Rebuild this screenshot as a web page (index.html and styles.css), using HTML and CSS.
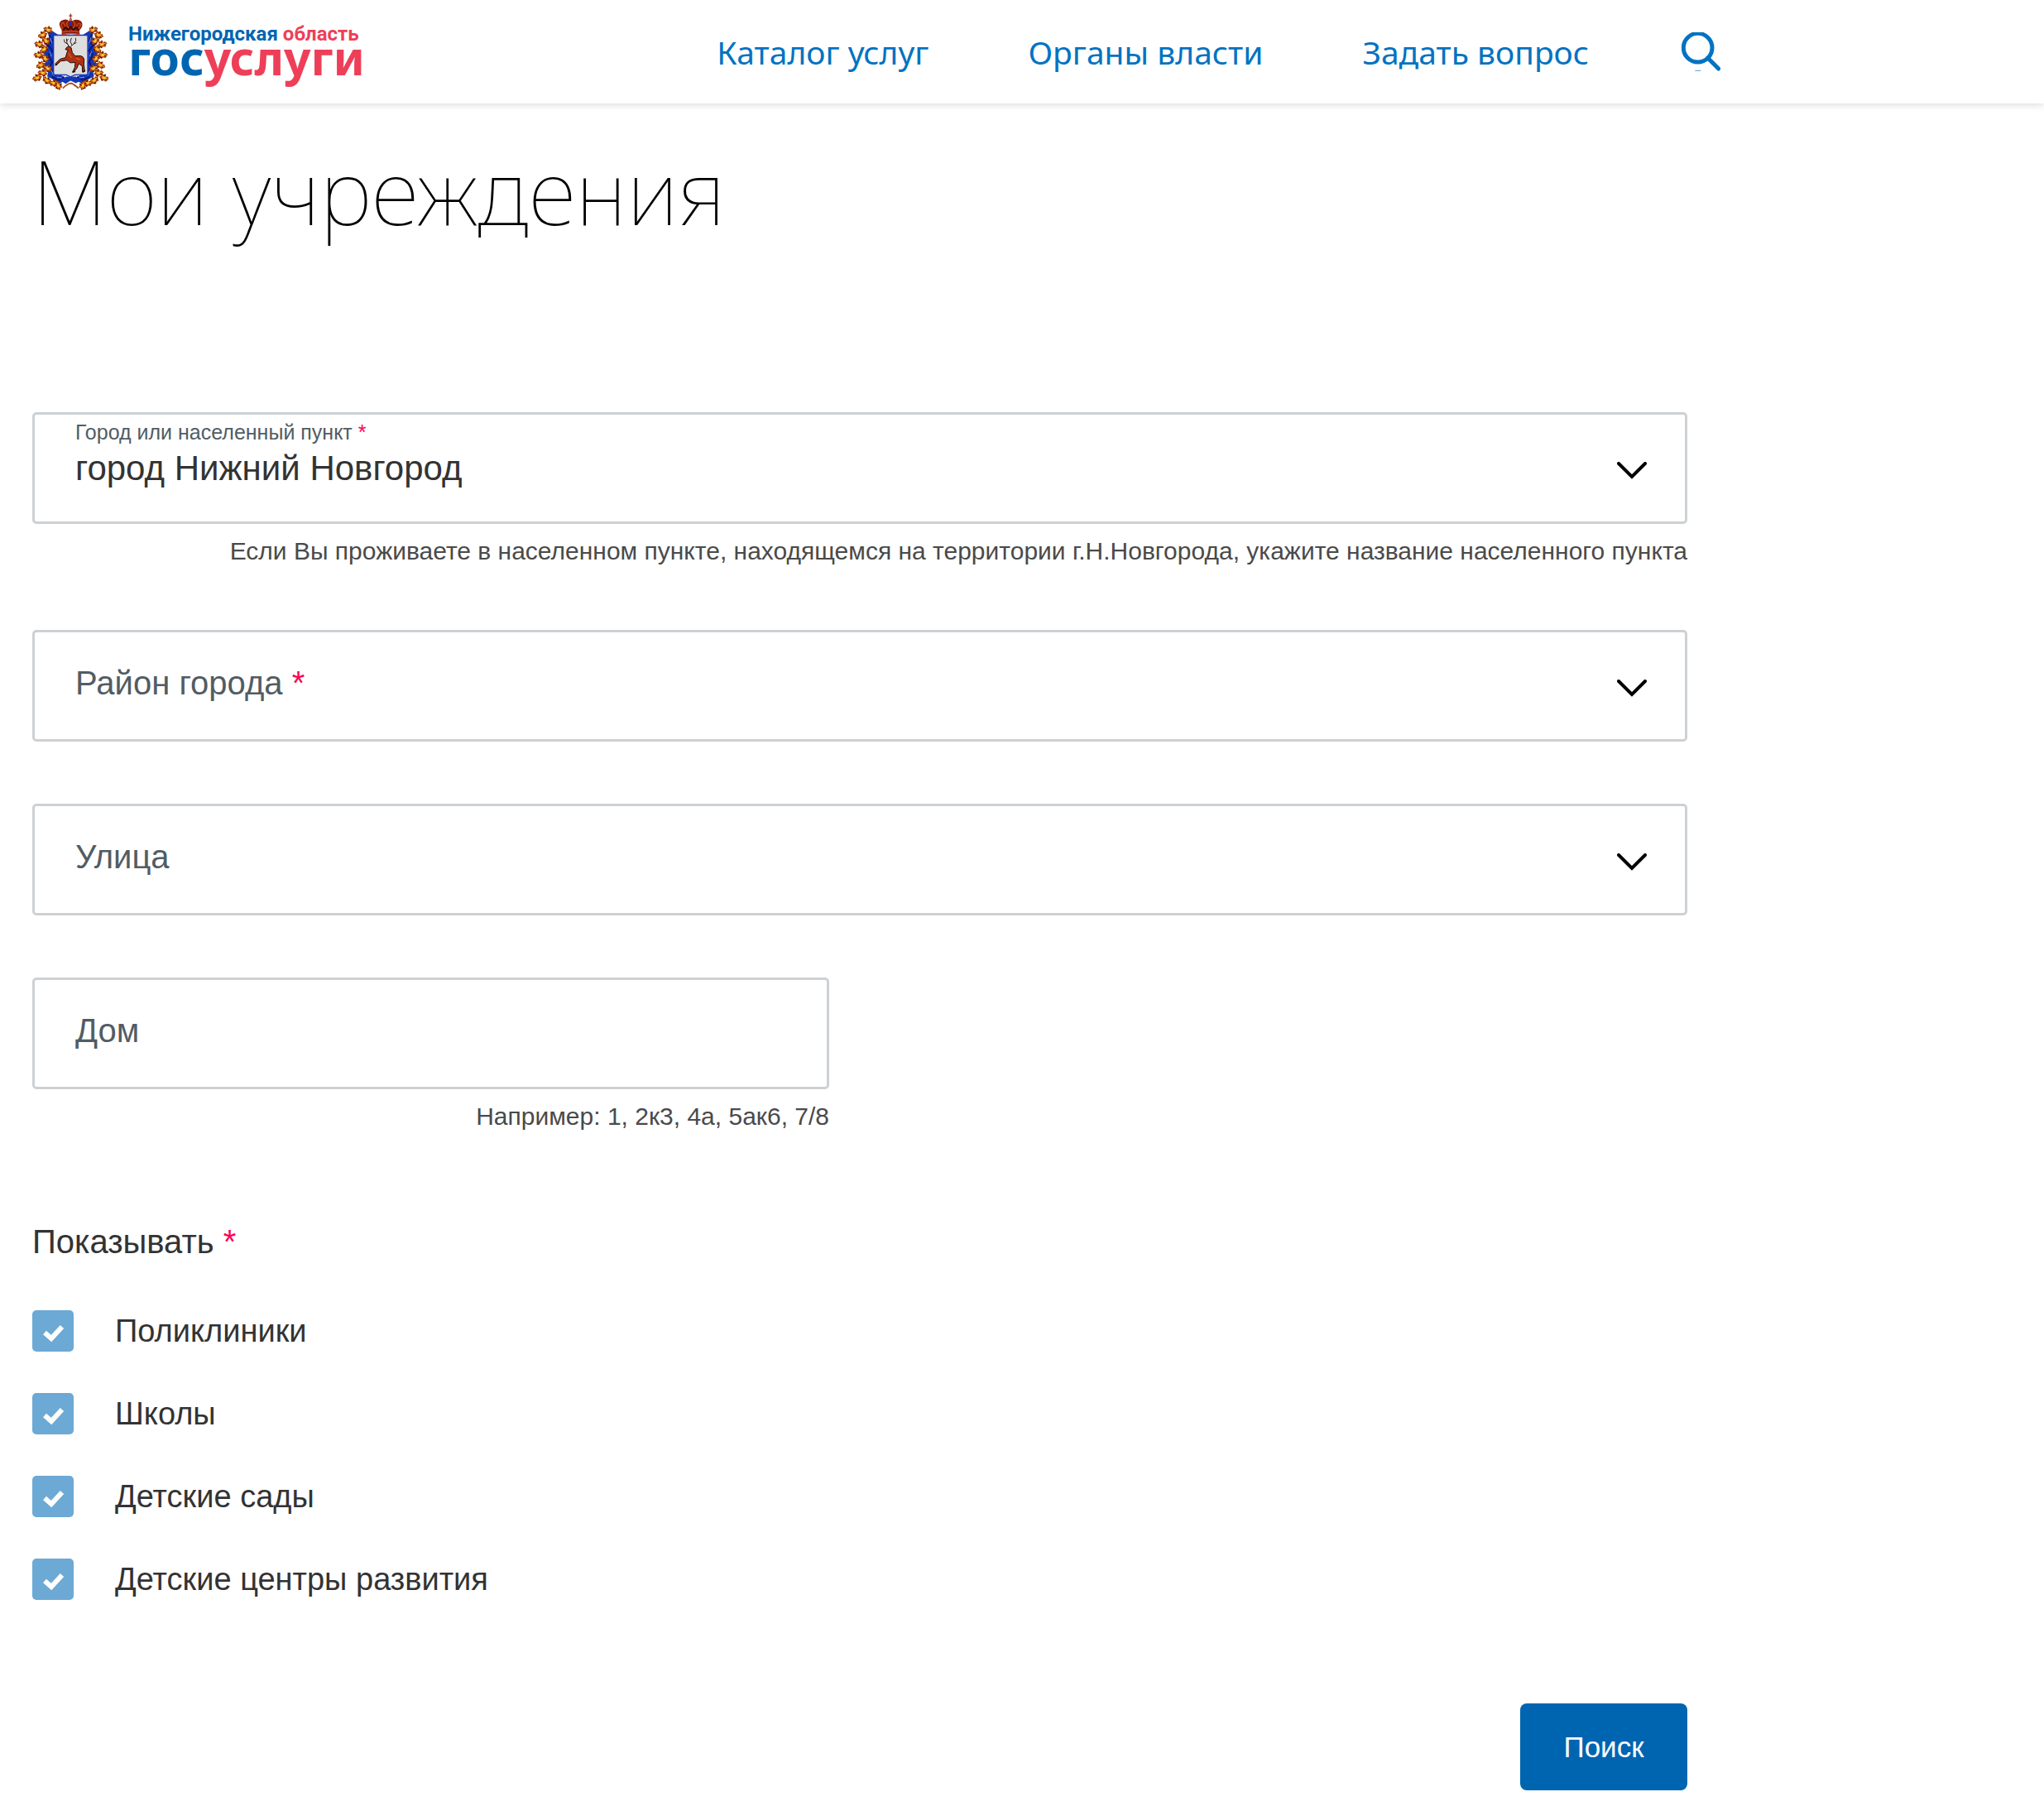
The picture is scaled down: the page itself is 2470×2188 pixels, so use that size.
FILE: index.html
```html
<!DOCTYPE html>
<html lang="ru">
<head>
  <meta charset="UTF-8" />
  <title>Мои учреждения</title>
  <link rel="stylesheet" href="styles.css">
</head>
<body>

<header class="header">
  <div class="header-inner">
    <a class="logo" href="#">
      <svg class="crest" viewBox="27 20 276 278" aria-hidden="true">
        <defs>
          <g id="leaf" transform="scale(1.2)">
            <path d="M-15 2 L-10 -6 L-5 -4 L-3 -13 L4 -9 L8 -12 L10 -4 L16 -2 L10 5 L6 11 L0 7 L-7 11 L-8 5 Z" fill="#a8380a"/>
            <path d="M-11 1 L-6 -2 L-1 -9 L3 -5 L8 -7 L7 0 L11 1 L4 5 L-2 4 L-6 7 Z" fill="#f39c1c"/>
            <path d="M-4 0 L1 -4 L5 -1 L0 3 Z" fill="#ffd04a"/>
            <path d="M-10 6 L-4 3 M5 8 L9 3 M-1 -9 L1 -4" stroke="#3c1005" stroke-width="3"/>
          </g>
          <g id="branch">
            <path d="M100 84 L84 92 L88 107 L68 126 L83 145 L65 163 L81 182 L70 207 L86 226 L81 248 L106 262 L124 277 L150 258 L132 244 L108 238 L103 190 L103 112 L122 98 Z" fill="#1238b8"/>
            <path d="M88 98 L101 120 L83 135 L101 155 L84 173 L100 196 L88 215 L107 235 M98 250 L122 262 L143 250" fill="none" stroke="#0a1878" stroke-width="6"/>
            <path d="M93 108 L98 128 M90 158 L97 176 M94 222 L104 245 M116 251 L135 254" fill="none" stroke="#7b9ced" stroke-width="3"/>
            <use href="#leaf" transform="translate(84 80) rotate(25)"/>
            <use href="#leaf" transform="translate(64 99) rotate(-15)"/>
            <use href="#leaf" transform="translate(76 119) rotate(50)"/>
            <use href="#leaf" transform="translate(51 132) rotate(20)"/>
            <use href="#leaf" transform="translate(69 151) rotate(-35)"/>
            <use href="#leaf" transform="translate(49 171) rotate(10)"/>
            <use href="#leaf" transform="translate(73 183) rotate(60)"/>
            <use href="#leaf" transform="translate(57 208) rotate(-20)"/>
            <use href="#leaf" transform="translate(82 219) rotate(35)"/>
            <use href="#leaf" transform="translate(64 236) rotate(15)"/>
            <use href="#leaf" transform="translate(44 254) rotate(-10)"/>
            <use href="#leaf" transform="translate(79 262) rotate(50)"/>
            <use href="#leaf" transform="translate(104 273) rotate(15)"/>
            <use href="#leaf" transform="translate(121 281) rotate(75)"/>
          </g>
        </defs>
        <use href="#branch"/>
        <use href="#branch" transform="translate(332 0) scale(-1 1)"/>
        <path d="M138 292 Q153 274 170 273 L195 291 M194 292 Q179 274 162 273" fill="none" stroke="#a34a0a" stroke-width="5"/>
        <path d="M129 263 L150 249 H185 L204 263 L185 273 L166 264 L148 275 Z" fill="#1238b8"/>
        <path d="M104 99 H228 V237 Q228 243 222 243 H182 L166 250 L150 243 H110 Q104 243 104 237 Z" fill="#dedede" stroke="#2035b5" stroke-width="4"/>
        <!-- deer -->
        <path d="M151 144 L158 139 L168 144 L172 162 L182 174 L203 174 Q214 177 215 188 L214 205 L217 229 L209 232 L208 211 L195 202 L190 217 L180 230 L173 233 L181 216 L183 198 L165 199 L153 190 L130 193 L115 207 L111 202 L127 186 L148 180 L152 164 L157 153 L147 151 Z" fill="#ae3212" stroke="#250b05" stroke-width="3"/>
        <path d="M161 140 L153 129 L151 111 M157 132 L144 124 L142 114 M166 140 L176 132 L185 119 L184 109 M176 131 L187 126 M171 135 L165 122 L169 109 M152 120 L158 113" fill="none" stroke="#2d211c" stroke-width="3"/>
        <path d="M158 164 L169 181 M186 183 L201 188" stroke="#e25727" stroke-width="4"/>
        <path d="M109 207 L117 206 M173 233 L183 230 M209 233 L219 228" stroke="#111" stroke-width="5"/>
        <!-- crown -->
        <path d="M134 80 Q115 52 138 44 Q152 39 160 47 L166 42 L173 47 Q190 38 204 49 Q216 62 198 82 L199 97 Q166 91 134 98 Z" fill="#851a08"/>
        <path d="M137 77 Q126 57 140 53 L151 74 M159 74 Q146 58 158 47 M174 74 Q189 59 174 47 M184 74 Q191 49 204 60 L195 77" fill="none" stroke="#c2401a" stroke-width="5"/>
        <path d="M139 80 L149 70 L158 81 L166 68 L176 81 L186 70 L195 81" fill="none" stroke="#200804" stroke-width="4"/>
        <path d="M136 88 Q166 80 198 88 M137 96 Q166 89 197 96" fill="none" stroke="#d8471d" stroke-width="4"/>
        <path d="M166 38 V65" stroke="#1735bb" stroke-width="7"/>
        <path d="M166 21 V37 M160 29 H172" stroke="#a43216" stroke-width="4"/>
        <circle cx="166" cy="43" r="5" fill="#df6231"/>
      </svg>
      <span class="logo-text">
        <span class="logo-region">Нижегородская <span class="red">область</span></span>
        <span class="logo-name">гос<span class="red">услуги</span></span>
      </span>
    </a>
    <nav class="nav">
      <a href="#">Каталог услуг</a>
      <a href="#">Органы власти</a>
      <a href="#">Задать вопрос</a>
    </nav>
    <button class="search" type="button" aria-label="Поиск по сайту">
      <svg viewBox="1296 54 141 141" aria-hidden="true">
        <circle cx="1355" cy="110" r="52" fill="none" stroke="#0173c1" stroke-width="15"/>
        <path d="M1391 147 L1430 186" stroke="#0173c1" stroke-width="15" stroke-linecap="round"/>
        <path d="M1345 193 H1366" stroke="#0173c1" stroke-width="2"/>
      </svg>
    </button>
  </div>
</header>

<main class="container">
  <h1>Мои учреждения</h1>

  <form class="form">
    <div class="group">
      <div class="field filled">
        <select id="city">
          <option>город Нижний Новгород</option>
        </select>
        <label for="city">Город или населенный пункт <span class="required">*</span></label>
        <svg class="arrow" viewBox="0 0 36 21" aria-hidden="true"><path d="M2 2 L18 18 L34 2"/></svg>
      </div>
      <div class="hint">Если Вы проживаете в населенном пункте, находящемся на территории г.Н.Новгорода, укажите название населенного пункта</div>
    </div>

    <div class="group">
      <div class="field">
        <select id="district"><option></option></select>
        <label for="district">Район города <span class="required">*</span></label>
        <svg class="arrow" viewBox="0 0 36 21" aria-hidden="true"><path d="M2 2 L18 18 L34 2"/></svg>
      </div>
    </div>

    <div class="group">
      <div class="field">
        <select id="street"><option></option></select>
        <label for="street">Улица</label>
        <svg class="arrow" viewBox="0 0 36 21" aria-hidden="true"><path d="M2 2 L18 18 L34 2"/></svg>
      </div>
    </div>

    <div class="group half">
      <div class="field">
        <input type="text" id="house">
        <label for="house">Дом</label>
      </div>
      <div class="hint">Например: 1, 2к3, 4а, 5ак6, 7/8</div>
    </div>

    <fieldset class="show">
      <legend>Показывать <span class="required">*</span></legend>
      <label class="check"><input type="checkbox" checked>Поликлиники</label>
      <label class="check"><input type="checkbox" checked>Школы</label>
      <label class="check"><input type="checkbox" checked>Детские сады</label>
      <label class="check"><input type="checkbox" checked>Детские центры развития</label>
    </fieldset>

    <button class="submit" type="button">Поиск</button>
  </form>
</main>

</body>
</html>
```

FILE: styles.css
```css
* {
  box-sizing: border-box;
}

body {
  margin: 0;
  background: #fff;
  color: #333;
  font-family: "Liberation Sans", Arial, sans-serif;
}

/* Header */
.header {
  padding: 0 39px;
  background: #fff;
  box-shadow: 0 0 10px rgba(0,0,0,0.2);
}

.header-inner {
  display: flex;
  align-items: center;
  max-width: 2040px;
  height: 125px;
}

.logo {
  display: flex;
  align-items: center;
  gap: 24px;
  color: #0065b1;
  text-decoration: none;
}

.crest {
  width: 92px;
  height: 93px;
}

.logo-text {
  display: flex;
  flex-direction: column;
  padding-bottom: 14px;
}

.logo-region {
  font: bold 24px/26px Roboto, sans-serif;
}

.logo-name {
  font: bold 57px/30px "Noto Sans", sans-serif;
}

.red {
  color: #ee3f58;
}

.nav {
  display: flex;
  gap: 120px;
  margin-left: auto;
  font: 39px/48px "Noto Sans", sans-serif;
}

.nav a {
  color: #0173c1;
  text-decoration: none;
  white-space: nowrap;
}

.search {
  width: 47px;
  height: 47px;
  margin-left: 112px;
  padding: 0;
  border: none;
  background: none;
  cursor: pointer;
}

.search svg {
  display: block;
}

/* Page */
.container {
  max-width: 2078px;
  padding: 0 39px 25px;
}

h1 {
  margin: 0;
  padding: 38px 0 200px;
  color: #000;
  font: 100 108px/135px "Noto Sans", sans-serif;
}

.form {
  display: flex;
  flex-direction: column;
}

.group {
  margin-bottom: 75px;
}

.half {
  width: calc(50% - 37px);
}

.field {
  position: relative;
}

.field select,
.field input {
  display: block;
  width: 100%;
  height: 135px;
  padding: 0 49px;
  border: 3px solid #cdd1d4;
  border-radius: 5px;
  background: #fff;
  color: #333;
  font: 42px "Liberation Sans", Arial, sans-serif;
  appearance: none;
}

.field label {
  position: absolute;
  top: 39px;
  left: 52px;
  color: #525c64;
  font-size: 40px;
  line-height: 50px;
  pointer-events: none;
}

.filled label {
  top: 9px;
  font-size: 25px;
  line-height: 30px;
}

.arrow {
  position: absolute;
  top: 60px;
  right: 49px;
  width: 36px;
  height: 21px;
  fill: none;
  stroke: #000;
  stroke-width: 4;
  stroke-linecap: round;
  pointer-events: none;
}

.required {
  color: #ff0055;
}

.hint {
  margin-top: 12px;
  color: #4a4a4a;
  font-size: 30px;
  line-height: 41px;
  text-align: right;
}

.show {
  display: flex;
  flex-direction: column;
  gap: 50px;
  margin: 31px 0 125px;
  padding: 0;
  border: none;
}

.show legend {
  padding: 0;
  margin-bottom: 58px;
  font-size: 40px;
  line-height: 50px;
}

.check {
  display: flex;
  align-items: center;
  gap: 50px;
  height: 50px;
  font-size: 38px;
}

.check input {
  width: 50px;
  height: 50px;
  margin: 0;
  border-radius: 5px;
  background: #6ca9d4;
  appearance: none;
}

.check input:checked {
  background-image: url("data:image/svg+xml,%3Csvg xmlns='http://www.w3.org/2000/svg' viewBox='0 0 50 50'%3E%3Cpath d='M15 27L23 34L36 20' fill='none' stroke='white' stroke-width='6'/%3E%3C/svg%3E");
}

.submit {
  align-self: flex-end;
  width: 202px;
  height: 105px;
  border: none;
  border-radius: 8px;
  background: #0065b1;
  color: #fff;
  font: 35px "Liberation Sans", Arial, sans-serif;
  cursor: pointer;
}
```
